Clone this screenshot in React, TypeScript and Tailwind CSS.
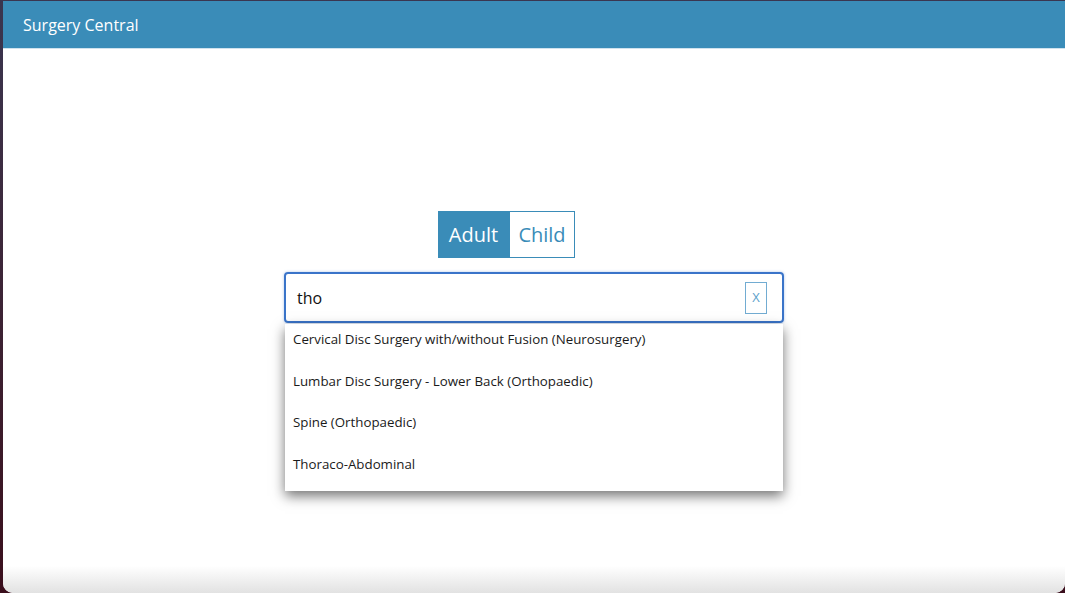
import React from "react";

const items = [
  "Cervical Disc Surgery with/without Fusion (Neurosurgery)",
  "Lumbar Disc Surgery - Lower Back (Orthopaedic)",
  "Spine (Orthopaedic)",
  "Thoraco-Abdominal",
];

export default function App() {
  return (
    <div
      className="h-[593px] w-[1065px] overflow-hidden bg-gradient-to-b from-[#3a3650] to-[#3a0e1c] pt-[1px] pl-[3px]"
      style={{ fontFamily: '"Open Sans", "Noto Sans", sans-serif' }}
    >
      <div className="relative flex h-[592px] flex-col overflow-hidden rounded-b-[10px] bg-white">
        <div className="flex h-[48px] shrink-0 items-center border-b border-[#cfe2ee] bg-[#3a8cb8] pl-[20px] text-[16px] text-white">
          Surgery Central
        </div>
        <div className="flex flex-1 flex-col bg-gradient-to-b from-white from-[95%] to-[#e2e2e2]">
          <div className="mx-auto mt-[162px] w-[500px]">
            <div className="ml-[154px] flex h-[47px] w-[137px]">
              <div className="flex w-[71px] items-center justify-center bg-[#3a8cb8] text-[20px] text-white">
                Adult
              </div>
              <div className="flex flex-1 items-center justify-center border border-[#3a8cb8] bg-white text-[20px] text-[#3a8cb8]">
                Child
              </div>
            </div>
            <div className="relative mt-[14px]">
              <div className="flex h-[51px] items-center rounded-[4px] border-2 border-[#3a74c9] pl-[11px] pr-[15px] shadow-[0_0_3px_rgba(58,116,201,0.4)]">
                <span className="flex-1 text-[16px] text-[#111]">tho</span>
                <div className="flex h-[32px] w-[22px] items-center justify-center border border-[#72acd2] text-[13px] text-[#5d9fcb]">
                  X
                </div>
              </div>
              <div className="absolute left-[1px] right-[1px] top-[52px] bg-white shadow-[0_5px_12px_rgba(0,0,0,0.55)]">
                {items.map((t) => (
                  <div
                    key={t}
                    className="h-[41.67px] pl-[8px] pt-[5px] text-[13.3px] leading-[20px] text-[#1a1a1a]"
                  >
                    {t}
                  </div>
                ))}
              </div>
            </div>
          </div>
        </div>
      </div>
    </div>
  );
}
